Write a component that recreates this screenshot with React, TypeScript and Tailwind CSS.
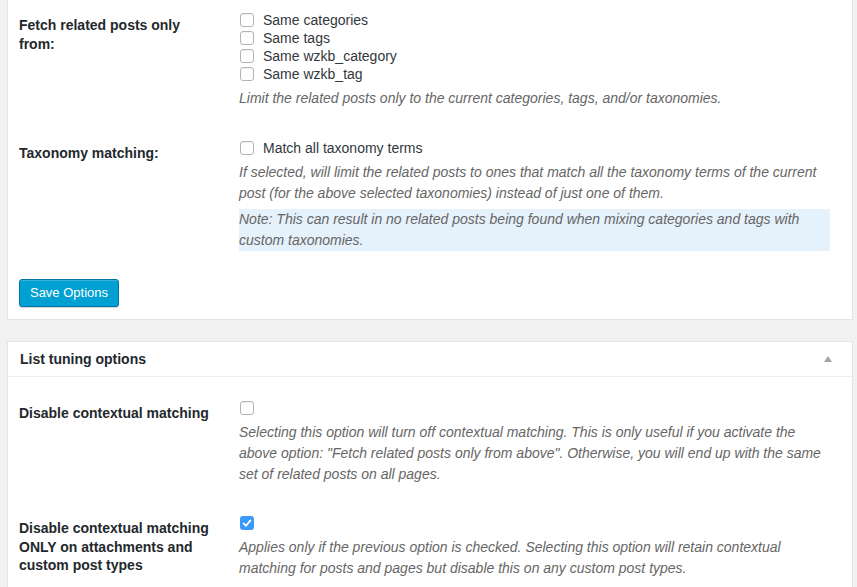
import React from "react";

function Box({ checked = false }: { checked?: boolean }) {
  if (checked) {
    return (
      <span className="inline-flex h-[14px] w-[14px] shrink-0 items-center justify-center rounded-[3px] bg-[#3b99fc]">
        <svg viewBox="0 0 14 14" className="h-[14px] w-[14px]">
          <path d="M3.6 7.4 L6 9.8 L10.4 4.4" fill="none" stroke="#fff" strokeWidth="1.7" strokeLinecap="round" strokeLinejoin="round" />
        </svg>
      </span>
    );
  }
  return (
    <span className="inline-block h-[14px] w-[14px] shrink-0 rounded-[3px] border border-[#b4b4b4] bg-white shadow-[inset_0_1px_1px_rgba(0,0,0,0.06)]" />
  );
}

function CheckLine({ label, checked }: { label?: string; checked?: boolean }) {
  return (
    <div className="flex h-[18px] items-center gap-[9px] pl-[1px] text-[14px] text-[#32373c]">
      <Box checked={checked} />
      {label ? <span>{label}</span> : null}
    </div>
  );
}

function Row({
  label,
  top,
  children,
}: {
  label: React.ReactNode;
  top: string;
  children: React.ReactNode;
}) {
  return (
    <div className={`flex items-start ${top}`}>
      <div className="mt-[5px] w-[220px] shrink-0 pr-[20px] text-[14px] font-bold leading-[18.5px] text-[#23282d]">
        {label}
      </div>
      <div className="w-[591px]">{children}</div>
    </div>
  );
}

function Desc({ children, className = "" }: { children: React.ReactNode; className?: string }) {
  return <p className={`text-[14px] italic leading-[21px] text-[#666] ${className}`}>{children}</p>;
}

export default function App() {
  return (
    <div className="h-[587px] w-[857px] overflow-hidden bg-[#f1f1f1] font-['Liberation_Sans',Arial,sans-serif]">
      <div className="ml-[7px] w-[846px] border border-t-0 border-[#e5e5e5] bg-white pb-[12px] pl-[11px]">
        <Row label="Fetch related posts only from:" top="pt-[11px]">
          <CheckLine label="Same categories" />
          <CheckLine label="Same tags" />
          <CheckLine label="Same wzkb_category" />
          <CheckLine label="Same wzkb_tag" />
          <Desc className="mt-[5px]">
            Limit the related posts only to the current categories, tags, and/or taxonomies.
          </Desc>
        </Row>
        <Row label="Taxonomy matching:" top="pt-[30px]">
          <CheckLine label="Match all taxonomy terms" />
          <Desc className="mt-[5px]">
            If selected, will limit the related posts to ones that match all the taxonomy terms of the current
            post (for the above selected taxonomies) instead of just one of them.
          </Desc>
          <div className="mt-[5px] bg-[#e5f1fb]">
            <Desc>
              Note: This can result in no related posts being found when mixing categories and tags with custom
              taxonomies.
            </Desc>
          </div>
        </Row>
        <button className="mt-[28px] flex h-[28px] w-[100px] items-center justify-center rounded-[3px] border border-[#0073aa] bg-[#00a0d2] text-[13px] text-white shadow-[inset_0_1px_0_rgba(120,200,230,0.5),0_1px_0_rgba(0,0,0,0.15)]">
          Save Options
        </button>
      </div>

      <div className="ml-[7px] mt-[21px] w-[846px] border border-[#e5e5e5] bg-white pb-[30px]">
        <div className="flex h-[35px] items-center justify-between border-b border-[#eeeeee] pl-[12px] pr-[20px]">
          <h3 className="text-[14px] font-bold text-[#23282d]">List tuning options</h3>
          <svg viewBox="0 0 8 6" className="h-[6px] w-[8px]">
            <path d="M4 0 L8 6 L0 6 Z" fill="#a0a5aa" />
          </svg>
        </div>
        <div className="pl-[11px]">
          <Row label="Disable contextual matching" top="pt-[22px]">
            <CheckLine />
            <Desc className="mt-[5px]">
              Selecting this option will turn off contextual matching. This is only useful if you activate the
              above option: "Fetch related posts only from above". Otherwise, you will end up with the same set of
              related posts on all pages.
            </Desc>
          </Row>
          <Row label="Disable contextual matching ONLY on attachments and custom post types" top="pt-[29px]">
            <CheckLine checked />
            <Desc className="mt-[5px]">
              Applies only if the previous option is checked. Selecting this option will retain contextual
              matching for posts and pages but disable this on any custom post types.
            </Desc>
          </Row>
        </div>
      </div>
    </div>
  );
}
